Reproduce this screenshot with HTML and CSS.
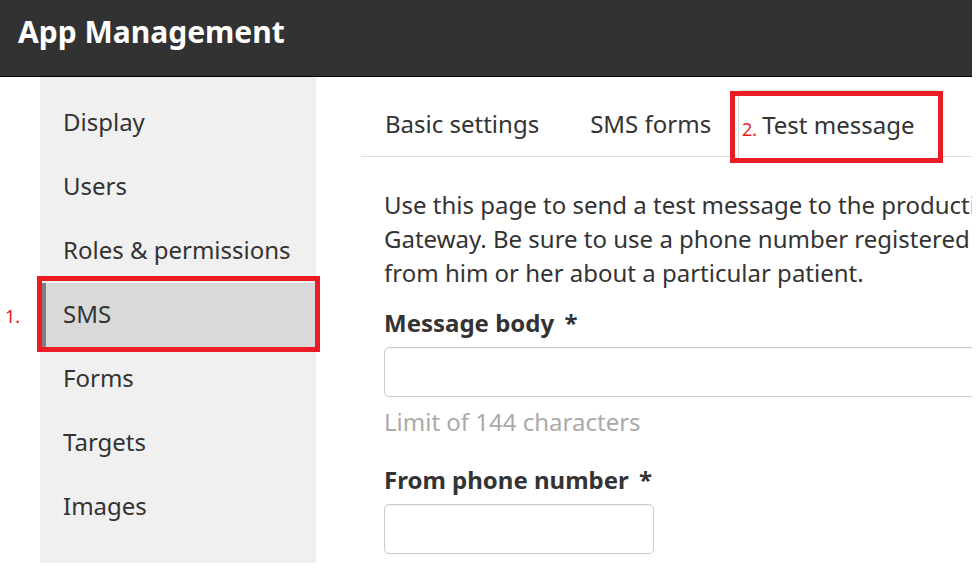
FILE: index.html
```html
<!DOCTYPE html>
<html>
<head>
<meta charset="utf-8">
<link rel="stylesheet" href="styles.css">
</head>
<body>
<div class="page">
  <header class="topbar"><h1 class="title">App Management</h1></header>
  <div class="layout">
    <nav class="sidebar">
      <div class="nav-item">Display</div>
      <div class="nav-item">Users</div>
      <div class="nav-item">Roles &amp; permissions</div>
      <div class="nav-item active">SMS</div>
      <div class="nav-item">Forms</div>
      <div class="nav-item">Targets</div>
      <div class="nav-item">Images</div>
    </nav>
    <main class="main">
      <ul class="tabs">
        <li class="tab">Basic settings</li>
        <li class="tab">SMS forms</li>
        <li class="tab active">Test message</li>
      </ul>
      <div class="content">
        <p class="intro">Use this page to send a test message to the production SMS<br>Gateway. Be sure to use a phone number registered to a user, so it looks like it came<br>from him or her about a particular patient.</p>
        <label class="label">Message body <span class="req">*</span></label>
        <div class="input wide"></div>
        <div class="help">Limit of 144 characters</div>
        <label class="label second">From phone number <span class="req">*</span></label>
        <div class="input narrow"></div>
      </div>
    </main>
  </div>
  <div class="mark mark-sms"></div>
  <span class="num num-1">1.</span>
  <div class="mark mark-tab"></div>
  <span class="num num-2">2.</span>
</div>
</body>
</html>
```

FILE: styles.css
```css
* { box-sizing: border-box; }
html, body { margin: 0; padding: 0; background: #fff; }
body { font-family: "Noto Sans", "Open Sans", sans-serif; color: #333; }
.page { position: relative; width: 972px; height: 577px; overflow: hidden; }
.topbar { height: 77px; background: #323232; border-bottom: 1px solid #000; display: flex; align-items: center; padding-left: 18px; }
.title { margin: 0; margin-top: -14px; color: #fff; font-size: 30px; font-weight: 700; }
.layout { display: flex; }
.sidebar { margin-left: 40px; width: 276px; flex: none; background: #f0f0f0; padding: 14px 0 24px; }
.nav-item { height: 64px; display: flex; align-items: center; padding-left: 23px; padding-bottom: 3px; font-size: 24px; color: #333; }
.nav-item.active { background: #d9d9d9; border-left: 6px solid #808080; padding-left: 17px; }
.main { margin-left: 45px; flex: 1; min-width: 0; }
.tabs { list-style: none; margin: 13px 0 0; padding: 0; display: flex; border-bottom: 1px solid #ddd; height: 67px; }
.tab { height: 67px; display: flex; align-items: center; padding: 0 24px 1px 23px; margin-right: 2px; border: 1px solid transparent; border-bottom: none; font-size: 24px; color: #333; border-radius: 4px 4px 0 0; white-space: nowrap; }
.tab.active { border-color: #ddd; background: #fff; height: 68px; }
.content { padding: 0 0 0 23px; width: 1100px; }
.intro { margin: 31px 0 0; font-size: 24px; line-height: 34px; white-space: nowrap; }
.label { display: block; font-weight: 700; font-size: 24px; margin-top: 17px; line-height: 32px; }
.label.second { margin-top: 25px; }
.req { margin-left: 4px; }
.input { border: 1px solid #ccc; border-radius: 5px; height: 50px; margin-top: 8px; box-shadow: inset 0 1px 1px rgba(0,0,0,0.06); }
.input.wide { width: 700px; }
.input.narrow { width: 270px; }
.help { color: #aaa; font-size: 24px; margin-top: 8px; line-height: 34px; }
.mark { position: absolute; border: 5px solid #ed1c24; }
.mark-sms { left: 37px; top: 276px; width: 283px; height: 76px; }
.mark-tab { left: 730px; top: 91px; width: 213px; height: 72px; }
.num { position: absolute; color: #ed1c24; font-size: 18px; line-height: 20px; }
.num-1 { left: 5px; top: 306px; }
.num-2 { left: 742px; top: 119px; }
```
